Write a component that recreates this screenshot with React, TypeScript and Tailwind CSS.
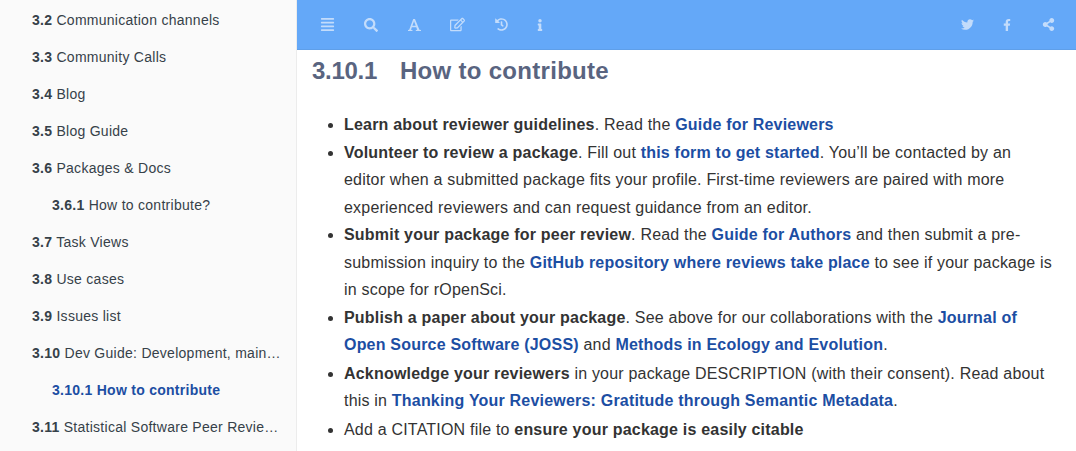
import { FaAlignJustify, FaSearch, FaRegEdit, FaHistory, FaInfo, FaTwitter, FaFacebookF, FaShareAlt } from 'react-icons/fa';
import type { ReactNode } from 'react';

const chapters = [
  { num: '3.2', title: 'Communication channels' },
  { num: '3.3', title: 'Community Calls' },
  { num: '3.4', title: 'Blog' },
  { num: '3.5', title: 'Blog Guide' },
  { num: '3.6', title: 'Packages & Docs' },
  { num: '3.6.1', title: 'How to contribute?', sub: true },
  { num: '3.7', title: 'Task Views' },
  { num: '3.8', title: 'Use cases' },
  { num: '3.9', title: 'Issues list' },
  { num: '3.10', title: 'Dev Guide: Development, maintenance, and peer review' },
  { num: '3.10.1', title: 'How to contribute', sub: true, active: true },
  { num: '3.11', title: 'Statistical Software Peer Review Guide' },
];

function A({ children }: { children: ReactNode }) {
  return <a className="font-bold text-[#1c4ea3]">{children}</a>;
}

function Sidebar() {
  return (
    <nav className="w-[297px] h-full shrink-0 overflow-hidden bg-[#fafafa] border-r border-[#ececec] text-[14px] leading-[17px] tracking-[0.27px] text-[#364149]">
      <ul className="pt-[2px]">
        {chapters.map((c) => (
          <li
            key={c.num}
            className={`h-[37px] py-[10px] pr-[15px] truncate ${c.sub ? 'pl-[52px]' : 'pl-[32px]'} ${c.active ? 'font-bold text-[#1c4ea3]' : ''}`}
          >
            <b>{c.num}</b> {c.title}
          </li>
        ))}
      </ul>
    </nav>
  );
}

function FontIcon() {
  return (
    <svg viewBox="0 0 14 14" className="ml-[30px] w-[13px] h-[13px]" fill="currentColor">
      <path d="M0 14v-1l1.3-.3L5.6 1h1.9l4.8 11.7 1.7.3v1H8.4v-1l1.5-.3-1-2.8H4.2l-1 2.8 1.6.3v1zM4.7 8.4h3.6L6.5 3.6z" />
    </svg>
  );
}

function Toolbar() {
  return (
    <header className="h-[50px] shrink-0 flex items-center justify-between bg-[#64a8f8] border-b border-[#5f9fe9] text-[#c3dcfb]">
      <div className="flex items-center">
        <FaAlignJustify size={15} className="ml-[23px]" />
        <FaSearch size={14} className="ml-[29px]" />
        <FontIcon />
        <FaRegEdit size={15} className="ml-[29px]" />
        <FaHistory size={13} className="ml-[30px]" />
        <FaInfo size={12} className="ml-[26px]" />
      </div>
      <div className="flex items-center">
        <FaTwitter size={13} className="mr-[27px]" />
        <FaFacebookF size={12} className="mr-[29px]" />
        <FaShareAlt size={13} className="mr-[21px]" />
      </div>
    </header>
  );
}

export default function App() {
  return (
    <div className="flex w-[1076px] h-[451px] overflow-hidden bg-white font-['Liberation_Sans',Arial,sans-serif] antialiased">
      <Sidebar />
      <main className="flex-1 min-w-0 flex flex-col">
        <Toolbar />
        <div className="pl-[15px] pr-[22px]">
          <h3 className="mt-[6px] text-[24px] leading-[30px] font-bold text-[#596480]">
            <span className="tracking-[-0.3px]">3.10.1</span>
            <span className="inline-block w-[23px]"></span>
            <span className="tracking-[0.3px]">How to contribute</span>
          </h3>
          <ul className="mt-[25px] pl-[32px] list-disc text-[16px] leading-[27.5px] tracking-[0.2px] text-[#333333]">
            <li>
              <b>Learn about reviewer guidelines</b>. Read the <A>Guide for Reviewers</A>
            </li>
            <li>
              <b>Volunteer to review a package</b>. Fill out <A>this form to get started</A>. You’ll be contacted by an editor when a submitted package fits your profile. First-time reviewers are paired with more experienced reviewers and can request guidance from an editor.
            </li>
            <li>
              <b>Submit your package for peer review</b>. Read the <A>Guide for Authors</A> and then submit a pre-submission inquiry to the <A>GitHub repository where reviews take place</A> to see if your package is in scope for rOpenSci.
            </li>
            <li>
              <b>Publish a paper about your package</b>. See above for our collaborations with the <A>Journal of Open Source Software (JOSS)</A> and <A>Methods in Ecology and Evolution</A>.
            </li>
            <li className="mt-[1px]">
              <b>Acknowledge your reviewers</b> in your package DESCRIPTION (with their consent). Read about this in <A>Thanking Your Reviewers: Gratitude through Semantic Metadata</A>.
            </li>
            <li className="mt-[1px]">
              Add a CITATION file to <b>ensure your package is easily citable</b>
            </li>
          </ul>
        </div>
      </main>
    </div>
  );
}
